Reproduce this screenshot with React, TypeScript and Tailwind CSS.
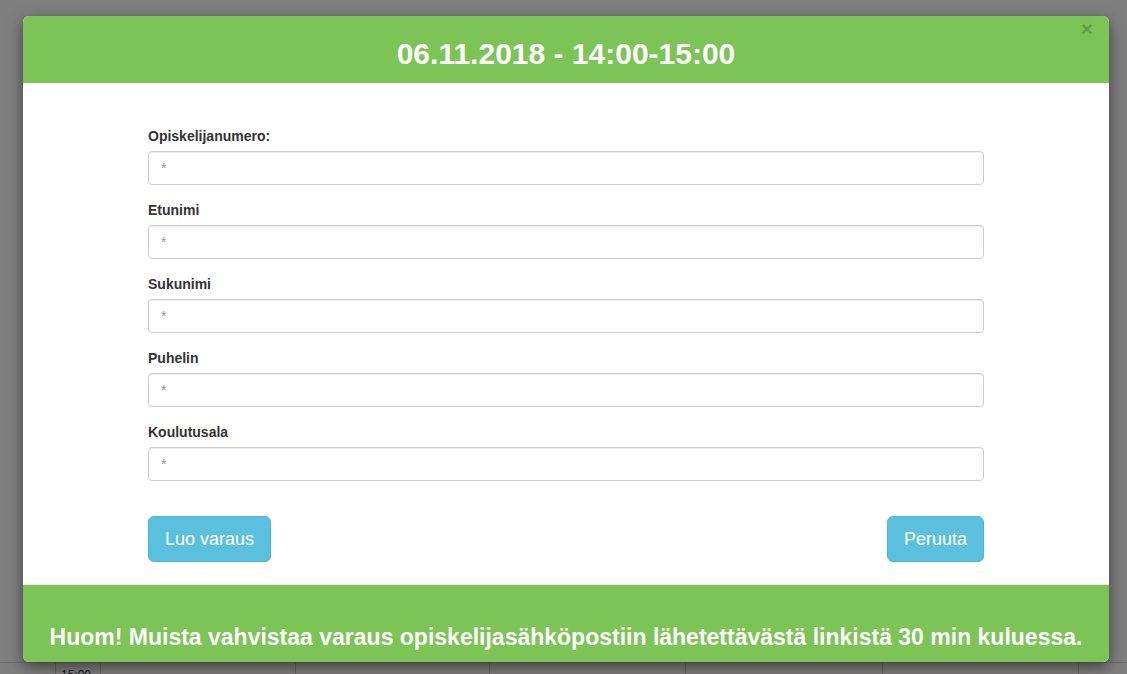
const fields = [
  { label: 'Opiskelijanumero:', name: 'studentNumber' },
  { label: 'Etunimi', name: 'firstName' },
  { label: 'Sukunimi', name: 'lastName' },
  { label: 'Puhelin', name: 'phone' },
  { label: 'Koulutusala', name: 'field' },
];

// column edges of the calendar peeking out below the modal
const calendarCols = [55, 45, 195, 194, 196, 197, 196, 49];

function CalendarStrip() {
  return (
    <div className="pt-[662px]">
      <div className="flex h-[12px] border-t border-[#ddd]">
        {calendarCols.map((w, i) => (
          <div
            key={i}
            style={{ width: w }}
            className={i === 0 ? 'shrink-0' : 'shrink-0 border-l border-[#ccc] px-[5px] pt-[5px] text-[12px] leading-[14px] text-[#333]'}
          >
            {i === 1 ? '15:00' : null}
          </div>
        ))}
      </div>
    </div>
  );
}

function Field({ label, name }: { label: string; name: string }) {
  return (
    <div className="mb-[15px]">
      <label htmlFor={name} className="mb-[5px] block text-[14px] font-bold leading-[20px] text-[#333]">
        {label}
      </label>
      <input
        id={name}
        placeholder="*"
        className="block h-[34px] w-full rounded-[4px] border border-[#ccc] bg-white px-[12px] py-[6px] text-[14px] text-[#555] shadow-[inset_0_1px_1px_rgba(0,0,0,0.075)] outline-none placeholder:text-[#999]"
      />
    </div>
  );
}

function InfoButton({ children }: { children: React.ReactNode }) {
  return (
    <button className="rounded-[6px] border border-[#46b8da] bg-[#5bc0de] px-[16px] py-[10px] text-[18px] leading-[24px] text-white">
      {children}
    </button>
  );
}

export default function App() {
  return (
    <div className="relative h-[674px] w-full overflow-hidden bg-white font-['Liberation_Sans',Arial,sans-serif]">
      <CalendarStrip />

      {/* backdrop */}
      <div className="absolute inset-0 bg-black/50" />

      {/* modal */}
      <div className="absolute left-[23px] top-[16px] w-[1086px] overflow-hidden rounded-[6px] bg-white shadow-[0_5px_15px_rgba(0,0,0,0.5)]">
        <div className="relative bg-[#7bc455] pb-[13px] pt-[21px] text-center">
          <h2 className="text-[30px] font-bold leading-[33px] text-white">06.11.2018 - 14:00-15:00</h2>
          <button className="absolute right-[16px] top-[2px] text-[21px] font-bold leading-[21px] text-black opacity-20">
            ×
          </button>
        </div>

        <div className="px-[125px] pb-[22px] pt-[43px]">
          {fields.map((f) => (
            <Field key={f.name} {...f} />
          ))}
          <div className="flex justify-between pt-[20px]">
            <InfoButton>Luo varaus</InfoButton>
            <InfoButton>Peruuta</InfoButton>
          </div>
        </div>

        <div className="border-t border-[#e5e5e5] bg-[#7bc455] pb-[13px] pt-[40px] text-center">
          <p className="text-[23px] font-bold leading-[24px] text-white">
            Huom! Muista vahvistaa varaus opiskelijasähköpostiin lähetettävästä linkistä 30 min kuluessa.
          </p>
        </div>
      </div>
    </div>
  );
}
